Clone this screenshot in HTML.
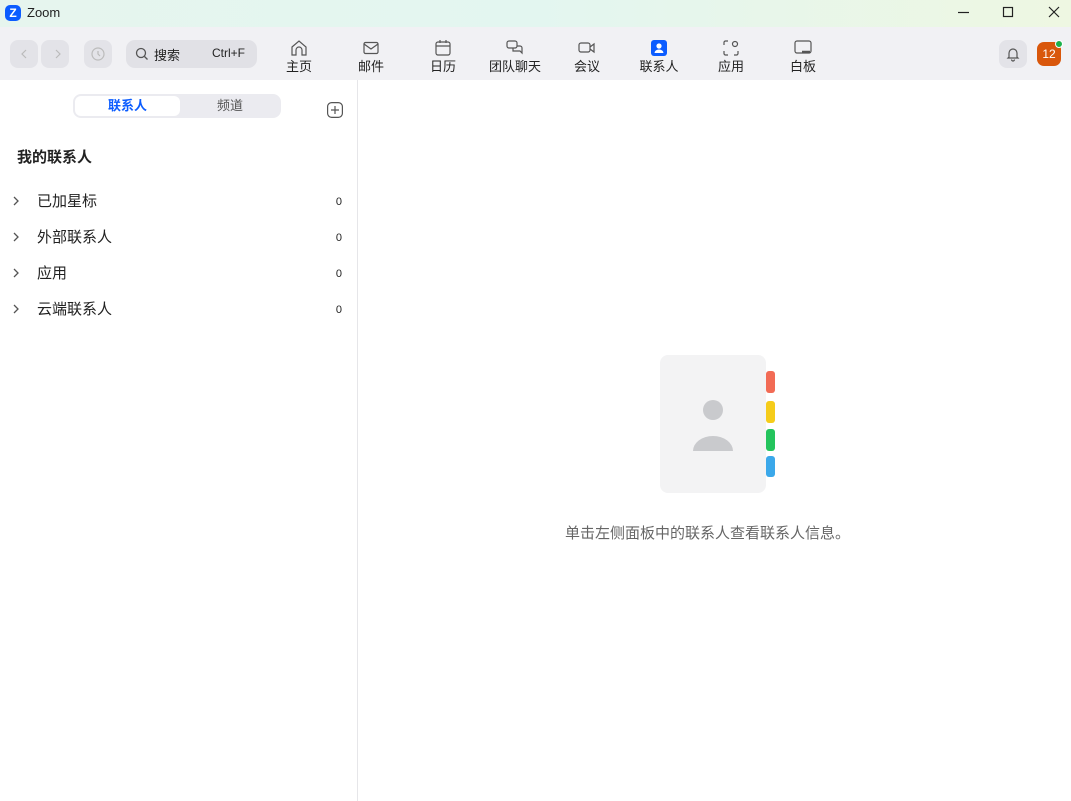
<!DOCTYPE html>
<html><head><meta charset="utf-8"><style>
*{margin:0;padding:0;box-sizing:border-box}
body{width:1071px;height:801px;overflow:hidden;background:#fff;font-family:"Liberation Sans","Noto Sans CJK SC",sans-serif;position:relative;color:#222}
.title{position:absolute;left:0;top:0;width:1071px;height:27px;background:linear-gradient(90deg,#e6f5ee,#e3f6f0 50%,#eef7e2)}
.tool{position:absolute;left:0;top:27px;width:1071px;height:53px;background:#f1f1f4}
.abs{position:absolute}
.btn{position:absolute;background:#e3e3e8;border-radius:8px}
.nav{position:absolute;top:38px;width:60px;text-align:center;font-size:13px;line-height:15px;color:#222}
.nav svg{display:block;margin:0 auto 1px}
.row{position:absolute;left:0;width:357px;height:36px;font-size:15px;line-height:20px;color:#222}
.row .c{position:absolute;left:12px;top:10px}
.row .t{position:absolute;left:37px;top:8px}
.row .n{position:absolute;right:15px;top:10px;font-size:11px;line-height:16px}
</style></head><body>
<div class="title"></div>
<div class="abs" style="left:5px;top:5px;width:16px;height:16px;border-radius:5px;background:#0b5cff;color:#fff;font-size:12px;font-weight:bold;text-align:center;line-height:16px">Z</div>
<div class="abs" style="left:27px;top:5px;font-size:13px;color:#222">Zoom</div>
<svg class="abs" style="left:950px;top:0" width="121" height="27" fill="none" stroke="#222" stroke-width="1.2"><path d="M8 12.5h11"/><rect x="53.5" y="7.5" width="9" height="9"/><path d="M99 7l10 10M109 7l-10 10"/></svg>
<div class="tool"></div>
<div class="btn" style="left:10px;top:40px;width:28px;height:28px"></div>
<div class="btn" style="left:41px;top:40px;width:28px;height:28px"></div>
<div class="btn" style="left:84px;top:40px;width:28px;height:28px"></div>
<svg class="abs" style="left:10px;top:40px" width="102" height="28" fill="none" stroke="#bbb" stroke-width="1.2"><path d="M16 10l-4 4 4 4M46 10l4 4-4 4"/><circle cx="88" cy="14" r="6"/><path d="M88 11v3l2 2"/></svg>
<div class="btn" style="left:126px;top:40px;width:131px;height:28px;border-radius:9px;background:#e1e1e6"></div>
<svg class="abs" style="left:134px;top:46px" width="16" height="16" fill="none" stroke="#555" stroke-width="1.3"><circle cx="7" cy="7" r="4.5"/><path d="M10.5 10.5l3 3"/></svg>
<div class="abs" style="left:154px;top:45px;font-size:13px;color:#222">搜索</div>
<div class="abs" style="left:212px;top:46px;font-size:12px;color:#222">Ctrl+F</div>
<div class="nav" style="left:269px"><svg width="20" height="20" fill="none" stroke="#555" stroke-width="1.2"><path d="M3 9l7-6 7 6v8h-4v-5a3 3 0 0 0-6 0v5H3z"/></svg>主页</div>
<div class="nav" style="left:341px"><svg width="20" height="20" fill="none" stroke="#555" stroke-width="1.2"><rect x="3" y="4.5" width="14" height="11" rx="1.5"/><path d="M3 6l7 5 7-5"/></svg>邮件</div>
<div class="nav" style="left:413px"><svg width="20" height="20" fill="none" stroke="#555" stroke-width="1.2"><rect x="3" y="4" width="14" height="13" rx="2"/><path d="M3 8h14M7 2v3M13 2v3"/></svg>日历</div>
<div class="nav" style="left:485px"><svg width="20" height="20" fill="none" stroke="#555" stroke-width="1.2"><rect x="2" y="3" width="10" height="7" rx="2"/><path d="M8 10v3h7l2 2v-5a2 2 0 0 0-2-2h-3"/></svg>团队聊天</div>
<div class="nav" style="left:557px"><svg width="20" height="20" fill="none" stroke="#555" stroke-width="1.2"><rect x="2" y="5" width="11" height="9" rx="2"/><path d="M13 9l4-3v8l-4-3"/></svg>会议</div>
<div class="nav" style="left:629px"><svg width="20" height="20"><rect x="2" y="2" width="16" height="16" rx="3" fill="#0b5cff"/><circle cx="10" cy="8" r="2.6" fill="#fff"/><path d="M5.5 15a4.5 3.5 0 0 1 9 0z" fill="#fff"/></svg>联系人</div>
<div class="nav" style="left:701px"><svg width="20" height="20" fill="none" stroke="#555" stroke-width="1.2"><path d="M3 7V4.5A1.5 1.5 0 0 1 4.5 3H7M3 13v2.5A1.5 1.5 0 0 0 4.5 17H7M17 13v2.5a1.5 1.5 0 0 1-1.5 1.5H13"/><circle cx="14" cy="6" r="2.5"/></svg>应用</div>
<div class="nav" style="left:773px"><svg width="20" height="20" fill="none" stroke="#555" stroke-width="1.2"><rect x="2" y="3" width="16" height="12" rx="2"/><path d="M9 14h8" stroke-width="2.5"/></svg>白板</div>
<div class="btn" style="left:999px;top:40px;width:28px;height:28px"></div>
<svg class="abs" style="left:1005px;top:46px" width="16" height="16" fill="none" stroke="#555" stroke-width="1.2"><path d="M4 11V7a4 4 0 0 1 8 0v4l1 1H3z M6.5 13.5a1.5 1.5 0 0 0 3 0"/></svg>
<div class="abs" style="left:1037px;top:42px;width:24px;height:24px;border-radius:7px;background:#d9570b;color:#fff;font-size:12px;text-align:center;line-height:24px">12</div>
<div class="abs" style="left:1055px;top:40px;width:8px;height:8px;border-radius:50%;background:#1bb14b;border:1px solid #fff"></div>
<div class="abs" style="left:357px;top:80px;width:1px;height:721px;background:#e6e6e9"></div>
<div class="abs" style="left:73px;top:94px;width:208px;height:24px;border-radius:8px;background:#ebebf0"></div>
<div class="abs" style="left:75px;top:96px;width:105px;height:20px;border-radius:6px;background:#fff;text-align:center;font-size:13px;font-weight:bold;color:#0b5cff;line-height:19px">联系人</div>
<div class="abs" style="left:180px;top:96px;width:100px;height:20px;text-align:center;font-size:13px;color:#555;line-height:19px">频道</div>
<svg class="abs" style="left:327px;top:102px" width="16" height="16" fill="none" stroke="#555" stroke-width="1.2"><rect x="0.6" y="0.6" width="14.8" height="14.8" rx="4"/><path d="M8 4v8M4 8h8"/></svg>
<div class="abs" style="left:17px;top:148px;font-size:15px;font-weight:bold;color:#222;line-height:20px">我的联系人</div>
<div class="row" style="top:184px"><svg class="c" width="8" height="14" fill="none" stroke="#555" stroke-width="1.3"><path d="M2 3l4 4-4 4"/></svg><span class="t">已加星标</span><span class="n">0</span></div>
<div class="row" style="top:220px"><svg class="c" width="8" height="14" fill="none" stroke="#555" stroke-width="1.3"><path d="M2 3l4 4-4 4"/></svg><span class="t">外部联系人</span><span class="n">0</span></div>
<div class="row" style="top:256px"><svg class="c" width="8" height="14" fill="none" stroke="#555" stroke-width="1.3"><path d="M2 3l4 4-4 4"/></svg><span class="t">应用</span><span class="n">0</span></div>
<div class="row" style="top:292px"><svg class="c" width="8" height="14" fill="none" stroke="#555" stroke-width="1.3"><path d="M2 3l4 4-4 4"/></svg><span class="t">云端联系人</span><span class="n">0</span></div>
<svg class="abs" style="left:655px;top:350px" width="125" height="150">
<rect x="111" y="21" width="9" height="22" rx="3" fill="#f26b55"/>
<rect x="111" y="51" width="9" height="22" rx="3" fill="#f5cc1a"/>
<rect x="111" y="79" width="9" height="22" rx="3" fill="#24c45d"/>
<rect x="111" y="106" width="9" height="21" rx="3" fill="#3ba8ea"/>
<rect x="5" y="5" width="106" height="138" rx="8" fill="#f3f3f4"/>
<circle cx="58" cy="60" r="10" fill="#c9cacd"/>
<path d="M38 101a20 15 0 0 1 40 0z" fill="#c9cacd"/>
</svg>
<div class="abs" style="left:565px;top:524px;font-size:15px;line-height:20px;color:#666">单击左侧面板中的联系人查看联系人信息。</div>
</body></html>
